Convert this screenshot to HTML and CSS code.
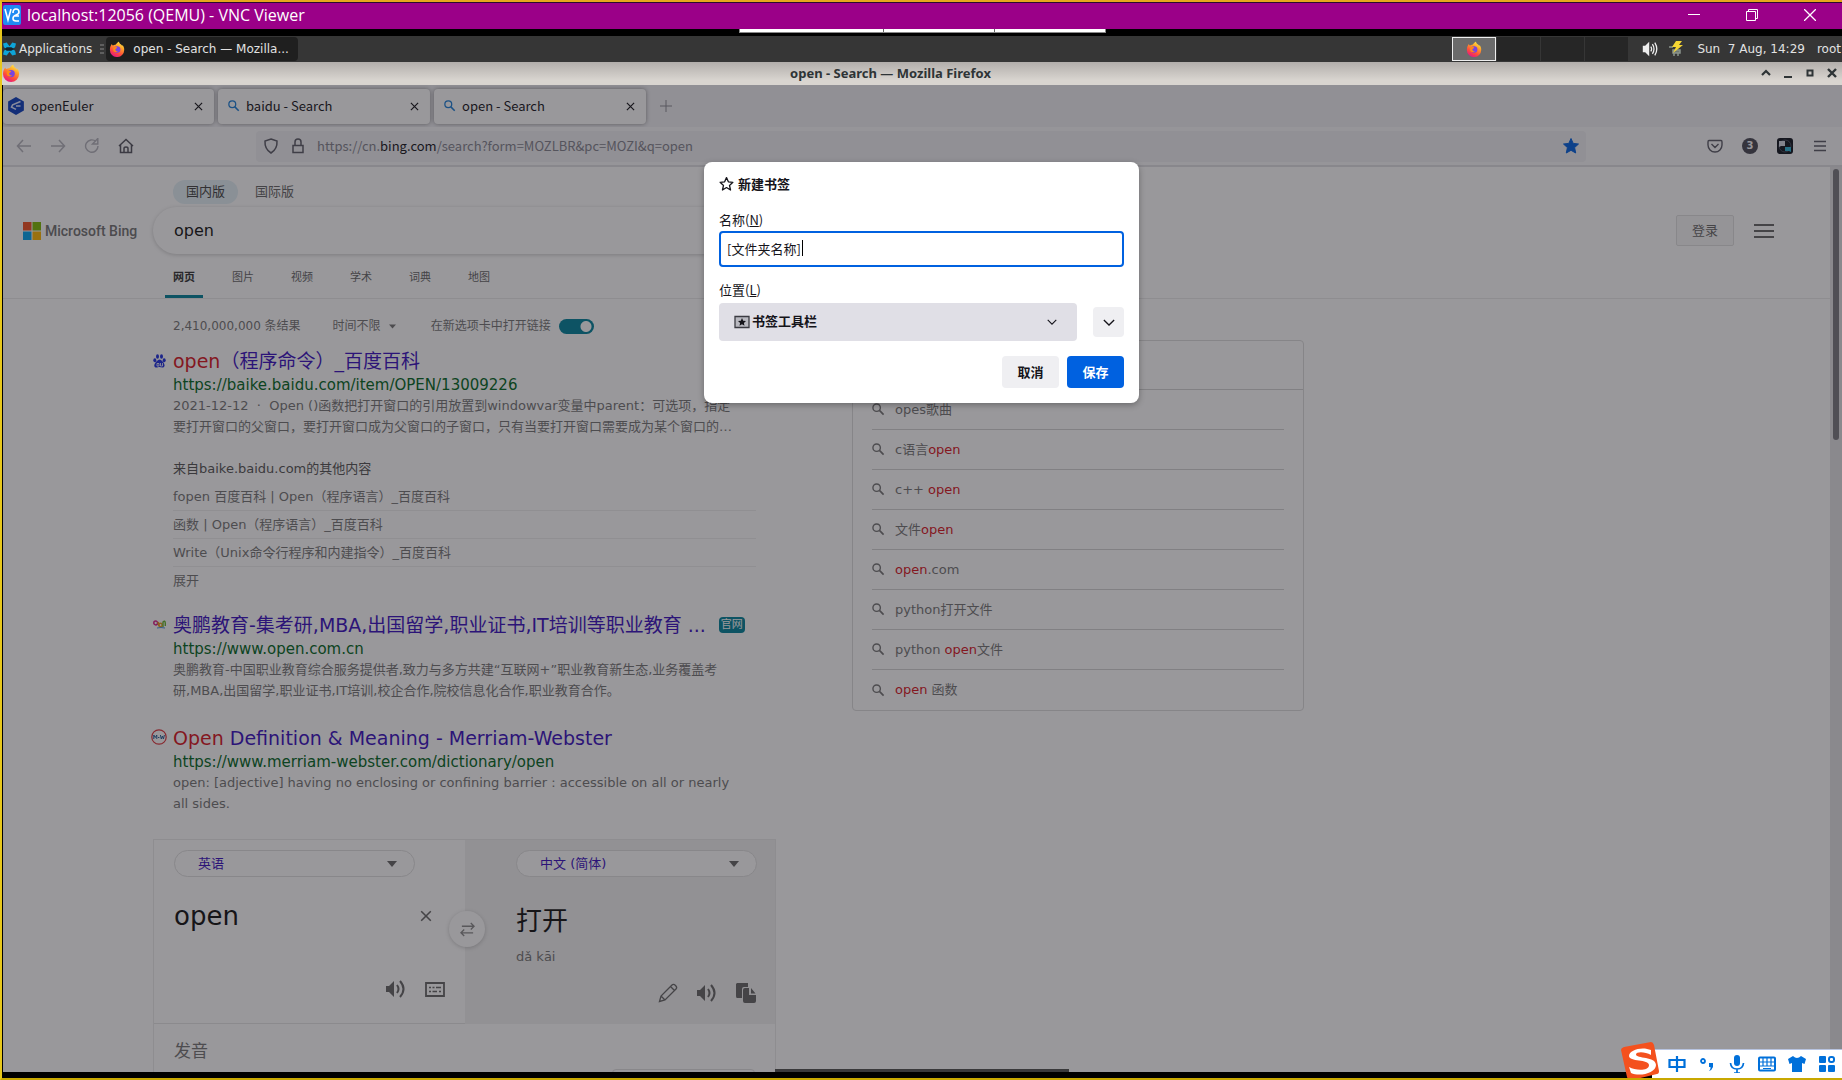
FILE: index.html
```html
<!DOCTYPE html>
<html lang="zh-CN">
<head>
<meta charset="utf-8">
<title>localhost:12056 (QEMU) - VNC Viewer</title>
<link rel="stylesheet" href="styles.css">
</head>
<body>
<svg class="defs" aria-hidden="true">
  <defs>
    <linearGradient id="ff-body" x1="0.8" y1="0" x2="0.3" y2="1">
      <stop offset="0" stop-color="#fff44f"/><stop offset="0.35" stop-color="#ffa028"/><stop offset="0.7" stop-color="#ff4a3c"/><stop offset="1" stop-color="#e31587"/>
    </linearGradient>
    <symbol id="firefox" viewBox="0 0 18 18">
      <path d="M1 10C1 6.500 2.200 4.800 3.200 3.400C3.400 4.300 3.900 4.700 4.400 5C5.400 4.400 6.300 4.200 7.300 4.300C8.300 3.200 9.300 1.500 11.300 0.500C11.200 2 12.200 2.800 13.600 4C14.200 4.600 14.600 5.100 14.900 5.700L15.200 4.400C16.600 6 17.200 8 17.100 10A8 8 0 0 1 1 10Z" fill="url(#ff-body)"/>
      <circle cx="9.200" cy="9.600" r="3.600" fill="#7a45e0"/>
      <path d="M4.800 7.500C6 6.500 7.600 6.400 9.200 7.200C9.200 8.300 7.600 8.200 7.200 9.200C7 10.800 8.500 11.800 10.200 11.300C8.700 13.200 5.600 12.700 4.800 10.600Z" fill="#ff8a16"/>
    </symbol>
    <symbol id="search" viewBox="0 0 14 14">
      <circle cx="5" cy="5" r="4" fill="none" stroke="currentColor" stroke-width="1.500"/><path d="M8 8L12.500 12.500" stroke="currentColor" stroke-width="1.800"/>
    </symbol>
    <symbol id="close" viewBox="0 0 10 10"><path d="M1 1L9 9M9 1L1 9" stroke="currentColor" stroke-width="1.300"/></symbol>
    <symbol id="chevron" viewBox="0 0 14 8"><path d="M1 1L7 7L13 1" fill="none" stroke="currentColor" stroke-width="1.500"/></symbol>
    <symbol id="caret" viewBox="0 0 10 6"><path d="M0 0H10L5 6Z" fill="currentColor"/></symbol>
    <symbol id="speaker" viewBox="0 0 20 20">
      <path d="M0 7H3L8 2V18L3 13H0Z" fill="currentColor"/><path d="M11 6Q14 10 11 14M14 2Q21 10 14 18" fill="none" stroke="currentColor" stroke-width="2"/>
    </symbol>
  </defs>
</svg>

<header class="vnc-title">
  <svg class="vnc-logo" viewBox="0 0 18 20"><rect width="18" height="20" rx="2" fill="#1f8bf3"/><path d="M2 4L5 15L8 4M10 8Q10 4 13 4T16 7Q16 9 13 10Q10 11 10 13.500T13 16H16M12 11H16" fill="none" stroke="#fff" stroke-width="1.600"/></svg>
  <h1>localhost:12056 (QEMU) - VNC Viewer</h1>
  <div class="vnc-controls">
    <button aria-label="Minimize"><svg viewBox="0 0 12 12"><path d="M0 5.500H12" stroke="#fff"/></svg></button>
    <button aria-label="Restore"><svg viewBox="0 0 12 12"><path d="M0.500 2.500H9.500V11.500H0.500ZM2.500 2.500V0.500H11.500V9.500H9.500" fill="none" stroke="#fff"/></svg></button>
    <button aria-label="Close"><svg viewBox="0 0 12 12"><path d="M0 0L12 12M12 0L0 12" stroke="#fff" stroke-width="1.300"/></svg></button>
  </div>
</header>
<div class="vnc-gap"><div class="vnc-toolbar"><i></i><i></i><i></i></div></div>

<nav class="panel">
  <button class="apps">
    <svg viewBox="0 0 14 14"><path d="M0 1L4 0L7 4L10 0L14 1L13 5L10 7L13 9L14 13L10 14L7 10L4 14L0 13L1 9L4 7L1 5Z" fill="#0ea5d8"/><path d="M4 5H9L12 7L9 9H4L2 7Z" fill="#14242c"/></svg>
    Applications
  </button>
  <svg class="grip" viewBox="0 0 4 11"><path d="M0 1H4M0 5H4M0 9H4" stroke="#888"/></svg>
  <button class="task"><svg><use href="#firefox"/></svg>open - Search — Mozilla...</button>
  <div class="workspaces">
    <div class="active"><svg><use href="#firefox"/></svg></div><div></div><div></div><div></div>
  </div>
  <div class="tray">
    <svg class="volume" viewBox="0 0 20 20"><path d="M1 6H4L9 1V19L4 14H1Z" fill="#eee"/><path d="M11 7Q13 10 11 13M13 4Q17 10 13 16M16 2Q21 10 16 18" fill="none" stroke="#eee" stroke-width="1.600"/></svg>
    <svg class="power" viewBox="0 0 16 16"><path d="M5 9H12V12H5ZM6 12V15M10 12V15M1 6H5" stroke="#8a948c" fill="#6e7770" stroke-width="1.500"/><path d="M8 0H14L11 4H15L5 12L8 6H4Z" fill="#f5d533"/></svg>
    <time>Sun&nbsp; 7 Aug, 14:29</time>
    <span>root</span>
  </div>
</nav>

<header class="window-title">
  <svg class="window-icon"><use href="#firefox"/></svg>
  <h2>open - Search — Mozilla Firefox</h2>
  <div class="window-controls">
    <button aria-label="Shade"><svg viewBox="0 0 10 10"><path d="M1 7L5 3L9 7" fill="none" stroke="currentColor" stroke-width="2.200"/></svg></button>
    <button aria-label="Minimize window"><svg viewBox="0 0 10 10"><path d="M1 9H9" stroke="currentColor" stroke-width="2"/></svg></button>
    <button aria-label="Maximize window"><svg viewBox="0 0 10 10"><path d="M2.500 2.500H7.500V7.500H2.500Z" fill="none" stroke="currentColor" stroke-width="2"/></svg></button>
    <button aria-label="Close window"><svg viewBox="0 0 10 10"><path d="M1 1L9 9M9 1L1 9" stroke="currentColor" stroke-width="2.400"/></svg></button>
  </div>
</header>

<div class="browser">
  <div class="tabs">
    <div class="tab">
      <svg class="tab-icon euler" viewBox="0 0 16 16"><path d="M8 0L15 4V12L8 16L1 12V4Z" fill="#0b3fc0"/><path d="M12 4L5 7L4 9L8 11M8 8H12" fill="none" stroke="#dfe6ff" stroke-width="1.400"/></svg>
      <span>openEuler</span><button aria-label="关闭标签页"><svg><use href="#close"/></svg></button>
    </div>
    <div class="tab">
      <svg class="tab-icon"><use href="#search"/></svg>
      <span>baidu - Search</span><button aria-label="关闭标签页"><svg><use href="#close"/></svg></button>
    </div>
    <div class="tab">
      <svg class="tab-icon"><use href="#search"/></svg>
      <span>open - Search</span><button aria-label="关闭标签页"><svg><use href="#close"/></svg></button>
    </div>
    <button class="new-tab" aria-label="新标签页"><svg viewBox="0 0 12 12"><path d="M6 0V12M0 6H12" stroke="currentColor"/></svg></button>
  </div>

  <div class="toolbar">
    <div class="nav-buttons">
      <button class="off" aria-label="后退"><svg viewBox="0 0 16 16"><path d="M15 8H1.500M7 2L1.500 8L7 14" fill="none" stroke="currentColor" stroke-width="1.500"/></svg></button>
      <button class="off" aria-label="前进"><svg viewBox="0 0 16 16"><path d="M1 8H14.500M9 2L14.500 8L9 14" fill="none" stroke="currentColor" stroke-width="1.500"/></svg></button>
      <button class="off" aria-label="刷新"><svg viewBox="0 0 16 16"><path d="M14 8A6.200 6.200 0 1 1 12 3.500M13.800 0.500V6H8.500Z" fill="none" stroke="currentColor" stroke-width="1.400"/></svg></button>
      <button aria-label="主页"><svg viewBox="0 0 16 16"><path d="M1 8L8 1.500L15 8M2.500 7V14.500H13.500V7M6 14V10.500Q6 9 8 9T10 10.500V14" fill="none" stroke="currentColor" stroke-width="1.500"/></svg></button>
    </div>
    <div class="urlbar">
      <svg viewBox="0 0 16 16"><path d="M8 1L14 3Q14.500 11 8 15Q1.500 11 2 3Z" fill="none" stroke="currentColor" stroke-width="1.500"/></svg>
      <svg viewBox="0 0 16 16"><path d="M3 7.500H13V14.500H3ZM5 7V4Q5 1 8 1T11 4V7" fill="none" stroke="currentColor" stroke-width="1.500"/></svg>
      <a class="url" href="#">https://cn.<b>bing.com</b>/search?form=MOZLBR&amp;pc=MOZI&amp;q=open</a>
      <button aria-label="编辑书签"><svg class="bookmark" viewBox="0 0 16 16"><path d="M8 0.500L10.200 5.400L15.500 6L11.600 9.600L12.700 15L8 12.300L3.300 15L4.400 9.600L0.500 6L5.800 5.400Z" fill="#0061e0" stroke="#0061e0" stroke-linejoin="round"/></svg></button>
    </div>
    <div class="extensions">
      <button aria-label="Pocket"><svg viewBox="0 0 16 16"><path d="M2 2.500H14Q15 2.500 15 4V7A7 7 0 0 1 1 7V4Q1 2.500 2 2.500ZM4.500 6L8 9.500L11.500 6" fill="none" stroke="currentColor" stroke-width="1.400"/></svg></button>
      <button class="count" aria-label="3 条通知">3</button>
      <button aria-label="翻译扩展"><svg viewBox="0 0 16 16"><rect width="16" height="16" rx="3" fill="#10141e"/><circle cx="8" cy="8" r="6" fill="none" stroke="#444b5c"/><path d="M2 3H8V8H4L2 9Z" fill="#d6dbe6"/><path d="M8 9H14V14L12 13H8Z" fill="#2fb5d8"/></svg></button>
      <button aria-label="菜单"><svg viewBox="0 0 16 16"><path d="M2 3.500H14M2 8H14M2 12.500H14" stroke="currentColor" stroke-width="1.400"/></svg></button>
    </div>
  </div>

  <div class="viewport">
    <div class="page">
      <header class="bing-header">
        <div class="versions"><a class="on" href="#">国内版</a><a href="#">国际版</a></div>
        <div class="search-row">
          <a class="logo" href="#">
            <svg viewBox="0 0 18 18"><path d="M0 0H8.500V8.500H0Z" fill="#f25022"/><path d="M9.500 0H18V8.500H9.500Z" fill="#7fba00"/><path d="M0 9.500H8.500V18H0Z" fill="#00a4ef"/><path d="M9.500 9.500H18V18H9.500Z" fill="#ffb900"/></svg>
            <span>Microsoft Bing</span>
          </a>
          <input class="search-box" type="text" aria-label="搜索" value="open">
          <div class="account">
            <button class="login">登录</button>
            <button class="menu" aria-label="设置"><svg viewBox="0 0 20 14"><path d="M0 1H20M0 7H20M0 13H20" stroke="currentColor" stroke-width="1.800"/></svg></button>
          </div>
        </div>
        <nav class="scopes"><a class="on" href="#">网页</a><a href="#">图片</a><a href="#">视频</a><a href="#">学术</a><a href="#">词典</a><a href="#">地图</a></nav>
      </header>

      <div class="columns">
        <main class="results">
          <div class="stats">
            <span>2,410,000,000 条结果</span>
            <button class="time">时间不限 <svg><use href="#caret"/></svg></button>
            <label class="toggle">在新选项卡中打开链接<input type="checkbox" checked></label>
          </div>

          <article class="result">
            <svg class="favicon" viewBox="0 0 13 14"><g fill="#1d2fe0"><ellipse cx="1.800" cy="6.300" rx="1.500" ry="2"/><ellipse cx="4.500" cy="2.500" rx="1.500" ry="2.200"/><ellipse cx="8.500" cy="2.500" rx="1.500" ry="2.200"/><ellipse cx="11.200" cy="6.300" rx="1.500" ry="2"/><path d="M6.500 5.500C9 6 12 9.500 11.500 12C10.500 14.500 8 13 6.500 13S2 14.500 1.300 12C1 9.500 4.500 6 6.500 5.500Z"/></g><path d="M4 9.500H6V12H4ZM7.500 9V12H9.500V9" fill="none" stroke="#fff" stroke-width="0.800"/></svg>
            <h3><a href="#"><em>open</em>（程序命令）_百度百科</a></h3>
            <cite>https://baike.baidu.com/item/OPEN/13009226</cite>
            <p>2021-12-12 &nbsp;·&nbsp; Open ()函数把打开窗口的引用放置到windowvar变量中parent：可选项，指定<br>要打开窗口的父窗口，要打开窗口成为父窗口的子窗口，只有当要打开窗口需要成为某个窗口的…</p>
            <h4>来自baike.baidu.com的其他内容</h4>
            <ul>
              <li><a href="#">fopen 百度百科 | Open（程序语言）_百度百科</a></li>
              <li><a href="#">函数 | Open（程序语言）_百度百科</a></li>
              <li><a href="#">Write（Unix命令行程序和内建指令）_百度百科</a></li>
              <li><a href="#">展开</a></li>
            </ul>
          </article>

          <article class="result">
            <svg class="favicon" viewBox="0 0 13 14"><circle cx="2.700" cy="5" r="1.900" fill="none" stroke="#d9228c" stroke-width="1.500"/><path d="M5 4L6 8" stroke="#f08a1c" stroke-width="1.500"/><circle cx="7.500" cy="7" r="1.700" fill="none" stroke="#e8a020" stroke-width="1.500"/><path d="M10 9V4Q12 2 12.300 5V8" fill="none" stroke="#67b52f" stroke-width="1.400"/><path d="M4 10Q8 9 12 10" stroke="#4a90d9" fill="none"/></svg>
            <h3><a href="#">奥鹏教育-集考研,MBA,出国留学,职业证书,IT培训等职业教育 ...</a><span class="badge">官网</span></h3>
            <cite>https://www.open.com.cn</cite>
            <p>奥鹏教育-中国职业教育综合服务提供者,致力与多方共建“互联网+”职业教育新生态,业务覆盖考<br>研,MBA,出国留学,职业证书,IT培训,校企合作,院校信息化合作,职业教育合作。</p>
          </article>

          <article class="result">
            <svg class="favicon big" viewBox="0 0 16 16"><circle cx="8" cy="8" r="7.200" fill="#fff" stroke="#e0353c" stroke-width="1.200"/><path d="M2.800 10V6L4.300 8.500L5.800 6V10M7 8.500H8.400M9.400 6L10.300 10L11.400 7L12.400 10L13.400 6" fill="none" stroke="#2a5f98"/></svg>
            <h3><a href="#"><em>Open</em> Definition &amp; Meaning - Merriam-Webster</a></h3>
            <cite>https://www.merriam-webster.com/dictionary/open</cite>
            <p>open: [adjective] having no enclosing or confining barrier : accessible on all or nearly<br>all sides.</p>
          </article>

          <section class="translator">
            <div class="panes">
              <div class="pane from">
                <div class="language"><select aria-label="源语言"><option>英语</option></select><svg><use href="#caret"/></svg></div>
                <div class="word"><span>open</span><button aria-label="清除"><svg><use href="#close"/></svg></button></div>
                <div class="tools">
                  <button aria-label="朗读原文"><svg><use href="#speaker"/></svg></button>
                  <button aria-label="键盘"><svg viewBox="0 0 20 20"><path d="M1 4H19V17H1Z" fill="none" stroke="currentColor" stroke-width="1.800"/><path d="M4 8.500H6M7.500 8.500H9.500M11 8.500H16M4 12.500H6M7.500 12.500H12M14 12.500H16" stroke="currentColor" stroke-width="1.600"/></svg></button>
                </div>
              </div>
              <div class="pane to">
                <div class="language"><select aria-label="目标语言"><option>中文 (简体)</option></select><svg><use href="#caret"/></svg></div>
                <div class="word"><span>打开</span></div>
                <p class="pinyin">dǎ kāi</p>
                <div class="tools">
                  <button aria-label="编辑"><svg viewBox="0 0 20 20"><path d="M1.500 18.500L3 13L14 2Q15.500 0.500 17.500 2.500T18 6L7 17ZM3 13L7 17M12.500 3.500L16.500 7.500" fill="none" stroke="currentColor" stroke-width="1.300"/></svg></button>
                  <button aria-label="朗读译文"><svg><use href="#speaker"/></svg></button>
                  <button aria-label="复制"><svg viewBox="0 0 20 20"><path d="M1 0H12V4H8Q6 4 6 6V15H1Q0 15 0 13V1Z" fill="currentColor"/><path d="M9 5H13V12H20V18Q20 20 18 20H9Q7 20 7 18V7Q7 5 9 5ZM15 5L19.500 10.500H15Z" fill="currentColor"/></svg></button>
                </div>
              </div>
              <button class="swap" aria-label="交换语言"><svg viewBox="0 0 16 16"><path d="M2 4.500H15M11.500 1L15 4.500L11.500 8M14 11.500H1M4.500 8L1 11.500L4.500 15" fill="none" stroke="currentColor" stroke-width="1.400"/></svg></button>
            </div>
            <h4>发音</h4>
            <div class="voice"></div>
          </section>
        </main>

        <aside class="related">
          <header></header>
          <ul>
            <li><svg><use href="#search"/></svg><a href="#">opes歌曲</a></li>
            <li><svg><use href="#search"/></svg><a href="#">c语言<em>open</em></a></li>
            <li><svg><use href="#search"/></svg><a href="#">c++ <em>open</em></a></li>
            <li><svg><use href="#search"/></svg><a href="#">文件<em>open</em></a></li>
            <li><svg><use href="#search"/></svg><a href="#"><em>open</em>.com</a></li>
            <li><svg><use href="#search"/></svg><a href="#">python打开文件</a></li>
            <li><svg><use href="#search"/></svg><a href="#">python <em>open</em>文件</a></li>
            <li><svg><use href="#search"/></svg><a href="#"><em>open</em> 函数</a></li>
          </ul>
        </aside>
      </div>
    </div>
    <div class="scrollbar"><div class="thumb"></div></div>
  </div>

  <div class="overlay">
    <form class="dialog" role="dialog" aria-labelledby="dialog-title">
      <h2 id="dialog-title"><svg viewBox="0 0 16 16"><path d="M8 1.200L10 5.700L14.800 6.200L11.200 9.500L12.300 14.400L8 11.800L3.700 14.400L4.800 9.500L1.200 6.200L6 5.700Z" fill="none" stroke="currentColor" stroke-width="1.400" stroke-linejoin="round"/></svg>新建书签</h2>
      <label for="name">名称(<u>N</u>)</label>
      <div class="name-field"><input id="name" type="text" value="[文件夹名称]"><i class="cursor"></i></div>
      <label for="folder">位置(<u>L</u>)</label>
      <div class="folder-row">
        <div class="folder">
          <svg class="folder-icon" viewBox="0 0 16 14"><path d="M1 1.500H15V12.500H1Z" fill="#b9b9c0" stroke="#3b3b42" stroke-width="1.300"/><path d="M8 3L9.200 5.700L12 6L9.900 7.900L10.500 10.700L8 9.200L5.500 10.700L6.100 7.900L4 6L6.800 5.700Z" fill="#15141a"/></svg>
          <select id="folder"><option>书签工具栏</option></select>
          <svg class="folder-arrow"><use href="#chevron"/></svg>
        </div>
        <button class="expand" type="button" aria-label="显示所有书签文件夹"><svg><use href="#chevron"/></svg></button>
      </div>
      <div class="actions"><button type="button">取消</button><button class="primary" type="button">保存</button></div>
    </form>
  </div>
</div>
<footer class="bottom-edge"><div class="status-strip"></div></footer>

<div class="ime">
  <svg class="sogou" viewBox="0 0 40 38"><path d="M1 8Q1 6 4 5L31 0Q33 0 34 3L39 29Q39 32 37 32L12 38Q8 38 7 35Z" fill="#f4511e"/><path d="M31 8C22 4 9 8 9 14C9 20 29 17 29 23C29 29 16 29 9 25L11 31C20 35 36 31 36 23C36 14 16 17 16 12.500C16 9.500 25 9.500 31 13Z" fill="#fff"/></svg>
  <svg viewBox="0 0 18 18"><path d="M1.500 5H16.500V12H1.500ZM9 1V17" fill="none" stroke="currentColor" stroke-width="2.200"/></svg>
  <svg viewBox="0 0 18 18"><circle cx="5" cy="6" r="2" fill="none" stroke="currentColor" stroke-width="1.800"/><path d="M11 8H15V12Q14 15 11 16Q13 14 12.500 12H11Z" fill="currentColor"/></svg>
  <svg viewBox="0 0 18 18"><rect x="6" y="0" width="6" height="11" rx="3" fill="currentColor"/><path d="M2.500 8Q3 14 9 14T15.500 8M9 14V18M6 18H12" fill="none" stroke="currentColor" stroke-width="1.700"/></svg>
  <svg viewBox="0 0 18 18"><rect x="1" y="2.500" width="16" height="13" rx="1" fill="none" stroke="currentColor" stroke-width="2"/><path d="M1 7H17M1 11H17M5 3V11M9 3V11M13 3V11M5 13.500H13" stroke="currentColor" stroke-width="1.200"/></svg>
  <svg viewBox="0 0 18 18"><path d="M0 4L5 1Q9 5 13 1L18 4L16.500 9L14 8V17H4V8L1.500 9Z" fill="currentColor"/></svg>
  <svg viewBox="0 0 18 18"><g fill="currentColor"><rect x="1" y="1" width="7" height="7" rx="1"/><rect x="1" y="10" width="7" height="7" rx="1"/><rect x="10" y="10" width="7" height="7" rx="1"/></g><rect x="11" y="2" width="5" height="5" rx="2" fill="none" stroke="currentColor" stroke-width="2"/></svg>
</div>
</body>
</html>
```
FILE: styles.css
```css
* { box-sizing: border-box; }
html, body { height: 100%; }
body {
  margin: 0;
  display: flex;
  flex-direction: column;
  position: relative;
  overflow: hidden;
  background: #000;
  border-top: 2px solid #e6a51c;
  border-left: 2px solid #e8c81c;
  border-bottom: 2px solid #c8a800;
  font: 13px/20px "DejaVu Sans", "Noto Sans CJK SC", sans-serif;
}
h1, h2, h3, h4, p, ul { margin: 0; padding: 0; font-weight: 400; }
ul { list-style: none; }
a { color: inherit; text-decoration: none; }
em, cite { font-style: normal; }
button, input, select {
  margin: 0;
  padding: 0;
  border: 0;
  background: none;
  font: inherit;
  color: inherit;
  appearance: none;
}
button { display: flex; align-items: center; justify-content: center; }
svg { display: block; flex: none; }
.defs { position: absolute; width: 0; height: 0; }

/* VNC window */
.vnc-title {
  display: flex;
  align-items: center;
  flex: none;
  height: 27px;
  padding: 0 26px 2px 1px;
  gap: 6px;
  background: #9b0088;
  border-top: 1px solid #2a0a30;
  color: #fff;
}
.vnc-logo { width: 18px; height: 20px; }
.vnc-title h1 { flex: 1; font: 16px/24px "Open Sans", sans-serif; }
.vnc-controls { display: flex; gap: 46px; }
.vnc-controls svg { width: 12px; height: 12px; }
.vnc-gap { flex: none; height: 7px; display: flex; justify-content: center; }
.vnc-toolbar { width: 367px; height: 4px; display: flex; gap: 1px; background: #666; border: 1px solid #888; border-top: 0; }
.vnc-toolbar i { flex: 1; background: #fff; }
.vnc-toolbar i:first-child { flex: 1.300; }

/* Desktop panel */
.panel {
  display: flex;
  align-items: center;
  flex: none;
  height: 26px;
  padding-right: 1px;
  background: #363636;
  color: #e2e2e2;
  font-size: 12px;
}
.apps { gap: 3px; margin-left: 1px; }
.apps svg { width: 13px; height: 14px; }
.grip { width: 4px; height: 11px; margin: 0 2px 0 8px; }
.task { justify-content: flex-start; width: 192px; height: 24px; padding: 0 3px; gap: 8px; background: #1f1f1f; border-radius: 4px; }
.task svg { width: 16px; height: 16px; }
.workspaces { display: flex; gap: 1px; margin-left: auto; }
.workspaces div { width: 43px; height: 24px; background: #262626; display: flex; align-items: center; justify-content: center; }
.workspaces .active { width: 44px; background: #6b6b6b; border: 1px solid #eee; }
.workspaces svg { width: 16px; height: 16px; }
.tray { display: flex; align-items: center; margin-left: 14px; white-space: nowrap; }
.volume, .power { width: 16px; height: 16px; }
.volume { margin-right: 10px; }
.tray time { margin: 0 12px 0 13px; }

/* Firefox window frame */
.window-title {
  display: flex;
  align-items: center;
  flex: none;
  height: 23px;
  padding: 0 5px 2px 0;
  background: linear-gradient(#b2aeab, #d9d5d0 80%);
  color: #2e3436;
}
.window-icon { width: 18px; height: 20px; }
.window-title h2 { flex: 1; text-align: center; font: bold 13px/20px "Noto Sans", sans-serif; }
.window-controls { display: flex; gap: 12px; }
.window-controls svg { width: 10px; height: 10px; }

/* Browser chrome */
.browser {
  flex: 1;
  min-height: 0;
  display: flex;
  flex-direction: column;
  position: relative;
  margin-left: 1px;
  background: #fff;
  color: #15141a;
}
.tabs {
  display: flex;
  align-items: center;
  flex: none;
  height: 42px;
  gap: 4px;
  background: #f0f0f4;
  font: 13px/20px "Noto Sans CJK SC", sans-serif;
}
.tab {
  display: flex;
  align-items: center;
  width: 212px;
  height: 35px;
  padding: 0 11px 0 10px;
  gap: 6px;
  background: #fff;
  border-radius: 4px;
  box-shadow: 0 0 4px rgba(0, 0, 0, 0.4);
}
.tab:first-child { width: 211px; padding-left: 4px; }
.tab span { flex: 1; }
.tab button svg { width: 9px; height: 9px; }
.tab-icon { width: 12px; height: 12px; color: #1c7fd8; }
.euler { width: 18px; height: 18px; }
.new-tab { margin-left: 10px; color: #8a8a94; }
.new-tab svg { width: 12px; height: 12px; }

.toolbar {
  display: flex;
  align-items: center;
  flex: none;
  height: 40px;
  padding: 0 14px 0 13px;
  background: #f9f9fb;
  border-bottom: 2px solid #e0e0e4;
  color: #5b5b66;
}
.nav-buttons { display: flex; gap: 18px; }
.nav-buttons svg { width: 16px; height: 16px; }
.nav-buttons button { color: #55555f; }
.nav-buttons .off { color: #b4b4bc; }
.urlbar {
  flex: 1;
  display: flex;
  align-items: center;
  height: 31px;
  margin: 0 121px 0 122px;
  padding: 0 7px;
  gap: 11px;
  background: #f0f0f4;
  border-radius: 4px;
}
.urlbar svg { width: 16px; height: 16px; }
.url { flex: 1; color: #84848e; font: 13px/24px "Noto Sans CJK SC", sans-serif; }
.url b { font-weight: 400; color: #15141a; }
.extensions { display: flex; gap: 19px; }
.extensions svg { width: 16px; height: 16px; }
.count { width: 16px; height: 16px; border-radius: 8px; background: #4a4a55; color: #f9f9fb; font-size: 10px; font-weight: 700; line-height: 16px; }

/* Search page */
.viewport { flex: 1; min-height: 0; display: flex; }
.page { flex: 1; min-width: 0; overflow: hidden; }
.scrollbar { width: 12px; padding: 2px 3px; background: #e3e3e6; }
.thumb { height: 271px; background: #7a7a80; border-radius: 3px; }

.bing-header { border-bottom: 1px solid #ececec; color: #666; }
.versions { display: flex; gap: 4px; padding: 13px 0 3px 170px; }
.versions a { padding: 0 13px; line-height: 24px; border-radius: 12px; }
.versions .on { background: #e3f0f6; color: #444; }
.search-row { display: flex; align-items: center; height: 47px; padding: 0 56px 0 20px; }
.logo { display: flex; align-items: center; gap: 4px; width: 130px; color: #737373; font: 500 14px/24px Roboto, sans-serif; white-space: nowrap; }
.logo svg { width: 18px; height: 18px; }
.search-box {
  width: 700px;
  height: 47px;
  padding: 0 21px;
  border-radius: 24px;
  background: #fff;
  box-shadow: 0 1px 4px rgba(0, 0, 0, 0.200);
  color: #111;
  font-size: 16px;
}
.account { display: flex; align-items: center; gap: 20px; margin-left: auto; }
.login { width: 58px; height: 31px; border: 1px solid #e0e0e0; border-radius: 2px; background: #f8f8f8; color: #666; }
.menu { color: #666; }
.menu svg { width: 20px; height: 14px; }
.scopes { display: flex; gap: 21px; padding-left: 162px; font-size: 11px; line-height: 34px; }
.scopes a { padding: 7px 8px 0; border-bottom: 3px solid transparent; }
.scopes .on { border-color: #008299; color: #333; font-weight: 700; }

.columns { display: flex; align-items: flex-start; gap: 76px; }
.results { width: 623px; margin-left: 150px; padding-top: 11px; }
.stats { display: flex; align-items: center; height: 32px; margin-bottom: 5px; padding-left: 20px; color: #767676; font-size: 12px; }
.time { gap: 8px; margin: 0 35px 0 32px; }
.time svg { width: 7px; height: 5px; }
.toggle { display: flex; align-items: center; gap: 8px; }
.toggle input {
  width: 35px;
  height: 15px;
  border-radius: 8px;
  background: radial-gradient(circle at 27px 50%, #fff 5px, transparent 6px) #00829b;
}
.result { position: relative; padding-left: 20px; margin-bottom: 23px; }
.result:nth-of-type(1) { margin-bottom: 17px; }
.favicon { position: absolute; left: 0; top: 7px; width: 13px; height: 14px; }
.favicon.big { left: -2px; top: 5px; width: 16px; height: 16px; }
.result h3 { display: flex; align-items: center; gap: 13px; font-size: 19px; line-height: 28px; color: #3a0fc0; white-space: nowrap; }
.result em, .related em { color: #d9141e; }
.result h3 a { white-space: pre; }
.badge { width: 26px; height: 16px; border-radius: 4px; background: #008299; color: #fff; font-size: 11px; line-height: 16px; text-align: center; }
.result cite { display: block; color: #006621; font-size: 15px; line-height: 20px; }
.result p { color: #767676; font-size: 13px; line-height: 21px; white-space: nowrap; }
.result h4 { margin-top: 18px; color: #555; font-size: 13px; line-height: 28px; }
.result li { width: 583px; line-height: 27px; border-bottom: 1px solid #eee; color: #767676; }
.result li:last-child { border: 0; }

.translator { margin-top: 25px; border: 1px solid #ececec; }
.panes { position: relative; display: flex; height: 184px; }
.pane { padding: 10px 20px; display: flex; flex-direction: column; }
.from { flex: none; width: 311px; border-bottom: 1px solid #e6e6e6; }
.to { flex: 1; min-width: 0; padding: 10px 19px 10px 51px; background: #f2f2f2; }
.language { position: relative; width: 241px; }
.language select {
  display: block;
  width: 100%;
  height: 27px;
  padding: 0 23px;
  border: 1px solid #e0e0e0;
  border-radius: 14px;
  background: #fff;
  color: #3a0fc0;
  line-height: 24px;
}
.language svg { position: absolute; right: 18px; top: 11px; width: 10px; height: 6px; color: #666; }
.word { display: flex; align-items: center; margin-top: 21px; color: #111; font-size: 26px; line-height: 36px; }
.from .word { justify-content: space-between; }
.word button { margin-right: 13px; color: #666; }
.word svg { width: 12px; height: 12px; }
.to .word { margin-top: 26px; }
.pinyin { color: #767676; font-size: 13px; line-height: 20px; margin-top: 8px; }
.tools { display: flex; gap: 19px; justify-content: flex-end; margin-top: auto; color: #666; }
.tools svg { width: 20px; height: 20px; }
.from .tools { margin-bottom: 14px; }
.to .tools { margin-bottom: 11px; }
.swap {
  position: absolute;
  left: 295px;
  top: 71px;
  width: 36px;
  height: 36px;
  border-radius: 18px;
  background: #fff;
  box-shadow: 0 1px 4px rgba(0, 0, 0, 0.200);
  color: #8a8a8a;
}
.swap svg { width: 15px; height: 15px; }
.translator h4 { padding: 12px 20px 0; color: #767676; font-size: 17px; line-height: 30px; }
.voice { width: 143px; height: 20px; margin: 3px 20px 0 auto; border: 1px solid #e0e0e0; border-radius: 4px; }

.related { width: 452px; margin-top: 41px; border: 1px solid #dcdcdc; border-radius: 4px; color: #767676; }
.related header { height: 49px; border-bottom: 1px solid #d4d4d4; }
.related ul { padding: 0 19px; }
.related li { display: flex; align-items: center; height: 40px; gap: 10px; border-bottom: 1px solid #d4d4d4; }
.related li:last-child { border: 0; }
.related svg { width: 13px; height: 13px; }

/* Bookmark dialog */
.overlay {
  position: absolute;
  inset: 0;
  display: flex;
  justify-content: center;
  align-items: flex-start;
  padding: 77px 2px 0 0;
  background: rgba(28, 27, 34, 0.45);
}
.dialog {
  width: 435px;
  padding: 12px 15px 15px;
  background: #fff;
  border-radius: 8px;
  box-shadow: 0 2px 6px rgba(0, 0, 0, 0.300);
  font: 13px/20px "Noto Sans CJK SC", sans-serif;
}
.dialog h2 { display: flex; align-items: center; gap: 4px; margin-bottom: 16px; font-size: 13px; font-weight: 700; line-height: 20px; }
.dialog h2 svg { width: 15px; height: 16px; }
.dialog label { display: block; margin-bottom: 1px; }
.name-field { position: relative; margin-bottom: 13px; }
.name-field input { display: block; width: 100%; height: 36px; padding: 0 7px 2px 6px; border: 2px solid #0061e0; border-radius: 4px; }
.cursor { position: absolute; left: 83px; top: 9px; width: 1px; height: 16px; background: #000; }
.folder-row { display: flex; align-items: center; justify-content: space-between; margin-top: 3px; }
.folder { position: relative; width: 358px; }
.folder select { display: block; width: 100%; height: 38px; padding: 0 33px 2px; border-radius: 4px; background: #e0dfe6; font-weight: 700; }
.folder-icon { position: absolute; left: 15px; top: 12px; width: 16px; height: 14px; }
.folder-arrow { position: absolute; right: 20px; top: 16px; width: 10px; height: 6px; }
.expand { width: 31px; height: 30px; border-radius: 4px; background: #efeff2; }
.expand svg { width: 12px; height: 7px; }
.actions { display: flex; justify-content: flex-end; gap: 8px; margin-top: 15px; }
.actions button { width: 57px; height: 32px; border-radius: 4px; background: #efeff2; font-weight: 700; }
.actions .primary { background: #0061e0; color: #fff; }

.bottom-edge { flex: none; height: 6px; position: relative; display: flex; justify-content: center; }
.status-strip { position: absolute; bottom: 100%; width: 294px; height: 3px; background: #39393b; }

/* Input method bar */
.ime {
  position: absolute;
  right: 0;
  bottom: 0;
  display: flex;
  align-items: center;
  gap: 12px;
  width: 190px;
  height: 29px;
  padding: 0 6px 0 16px;
  background: #fff;
  border-top: 1px solid #b8c4e0;
  color: #0070da;
}
.ime svg { width: 18px; height: 18px; }
.ime .sogou { position: absolute; left: -32px; bottom: -2px; width: 40px; height: 38px; }
```
